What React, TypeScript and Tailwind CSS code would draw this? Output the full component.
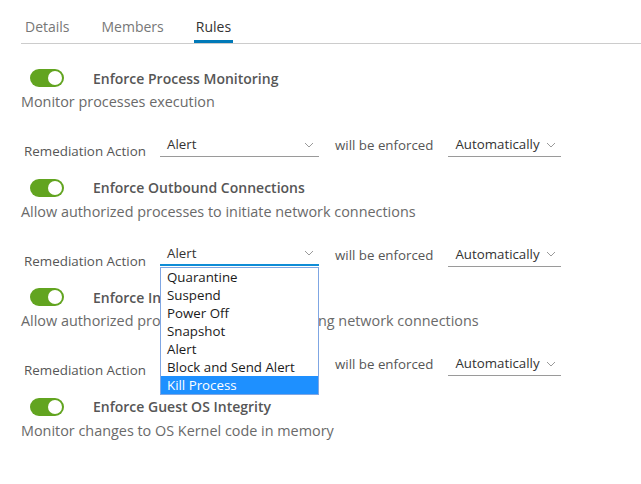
import React from 'react';

type Rule = {
  title: string;
  description: string;
  remediation?: boolean;
  open?: boolean;
};

const rules: Rule[] = [
  { title: 'Enforce Process Monitoring', description: 'Monitor processes execution', remediation: true },
  {
    title: 'Enforce Outbound Connections',
    description: 'Allow authorized processes to initiate network connections',
    remediation: true,
    open: true,
  },
  {
    title: 'Enforce Inbound Connections',
    description: 'Allow authorized processes to accept incoming network connections',
    remediation: true,
  },
  { title: 'Enforce Guest OS Integrity', description: 'Monitor changes to OS Kernel code in memory' },
];

const actions = ['Quarantine', 'Suspend', 'Power Off', 'Snapshot', 'Alert', 'Block and Send Alert', 'Kill Process'];

function Chevron() {
  return (
    <svg width="10" height="6" viewBox="0 0 10 6" className="shrink-0">
      <path d="M1 1l4 4 4-4" fill="none" stroke="#9a9a9a" strokeWidth="1" />
    </svg>
  );
}

function Toggle() {
  return (
    <div className="flex h-[18px] w-[34px] items-center justify-end rounded-full bg-[#62a420] pr-[2px]">
      <div className="h-[14px] w-[14px] rounded-full bg-white" />
    </div>
  );
}

function Select({ value, width, focused }: { value: string; width: string; focused?: boolean }) {
  return (
    <div
      className={`flex items-center justify-between pl-[7px] pr-[5px] ${width} ${
        focused ? 'h-[23px] border-b-2 border-[#0f8dd6]' : 'h-[24px] border-b border-[#9a9a9a]'
      }`}
    >
      <span className="pt-[1px] text-[13.3px] text-[#333]">{value}</span>
      <Chevron />
    </div>
  );
}

function RuleBlock({ rule, first }: { rule: Rule; first?: boolean }) {
  return (
    <div className={first ? 'mt-[22px]' : 'mt-[18.5px]'}>
      <div className="flex h-6 items-center">
        <div className="ml-[9px]">
          <Toggle />
        </div>
        <span className="ml-[29px] text-[14px] font-semibold text-[#565656]">{rule.title}</span>
      </div>
      <div className="mt-[2px] h-5 text-[14.4px] leading-5 text-[#6a6a6a]">{rule.description}</div>
      {rule.remediation && (
        <div className="mt-[21px] flex h-6 items-start text-[13.3px] text-[#565656]">
          <span className="ml-[3px] mt-[8px] w-[136px] text-[13.4px] leading-5">Remediation Action</span>
          <div className="relative">
            <Select value="Alert" width="w-[159px]" focused={rule.open} />
            {rule.open && (
              <ul className="absolute left-0 top-[24px] z-10 w-[159px] border border-[#7fa6e3] bg-white">
                {actions.map((a) => (
                  <li
                    key={a}
                    className={`h-[18px] pl-[6px] text-[13.3px] leading-[18px] ${
                      a === 'Kill Process' ? 'bg-[#1e90ff] text-white' : 'text-[#1a1a1a]'
                    }`}
                  >
                    {a}
                  </li>
                ))}
              </ul>
            )}
          </div>
          <span className="ml-[16px] leading-6">will be enforced</span>
          <div className="ml-[15px]">
            <Select value="Automatically" width="w-[113px]" />
          </div>
        </div>
      )}
    </div>
  );
}

export default function App() {
  return (
    <div className="h-[484px] w-[641px] overflow-hidden bg-white pl-[21px] font-['Open_Sans',sans-serif]">
      <nav className="flex border-b border-[#cccccc] pl-[2px]">
        {['Details', 'Members', 'Rules'].map((t, i) => (
          <div
            key={t}
            className={`mr-[28px] flex h-[43px] items-center px-[2px] pt-[10px] text-[14px] ${
              i === 2 ? 'text-[#333] shadow-[inset_0_-3px_0_#0079b8]' : 'text-[#777]'
            }`}
          >
            {t}
          </div>
        ))}
      </nav>
      {rules.map((r, i) => (
        <RuleBlock key={r.title} rule={r} first={i === 0} />
      ))}
    </div>
  );
}
